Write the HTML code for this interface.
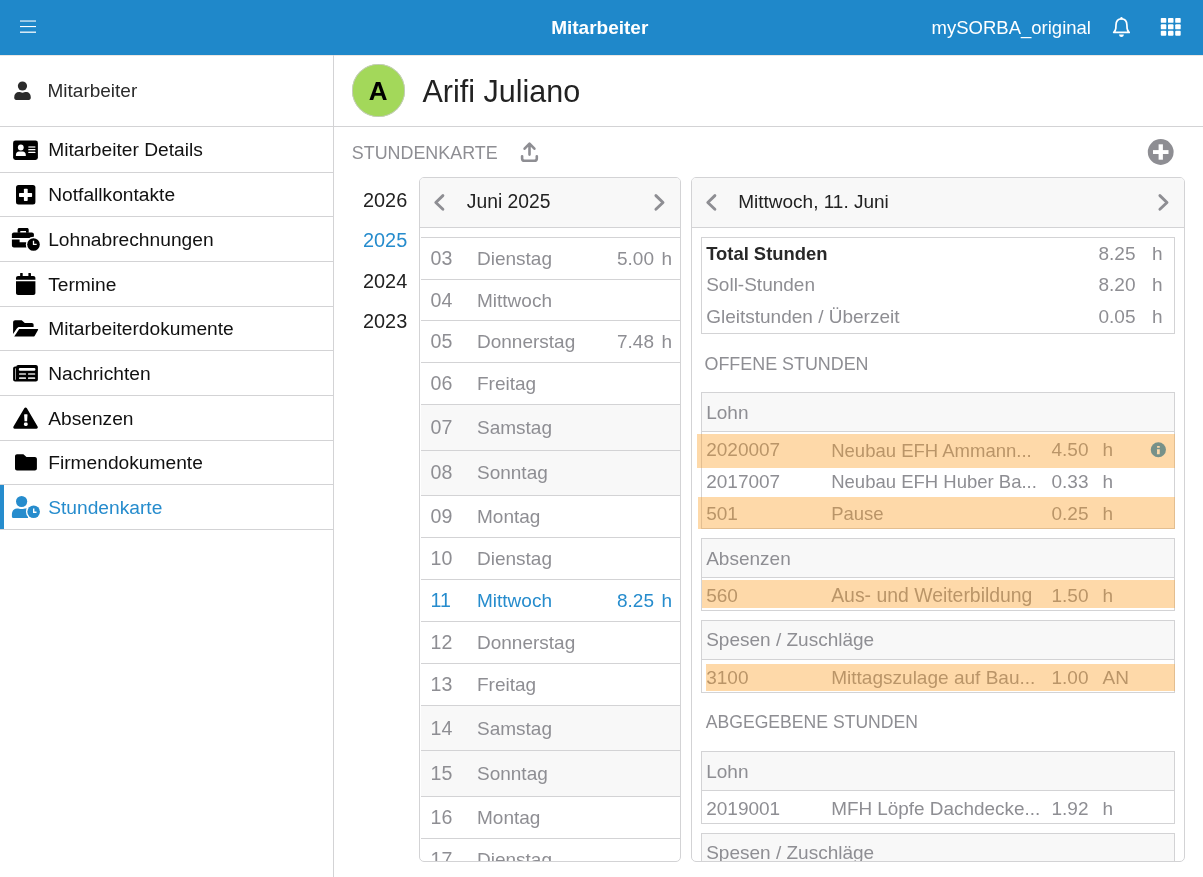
<!DOCTYPE html>
<html><head><meta charset="utf-8"><style>
html,body{margin:0;padding:0;}
body{width:1203px;height:877px;overflow:hidden;position:relative;background:#fff;font-family:'Liberation Sans', sans-serif;}
#root{position:absolute;left:0;top:0;width:1203px;height:877px;will-change:transform;}
.b{position:absolute;box-sizing:border-box;}
svg.b{overflow:visible;}
.t{position:absolute;white-space:nowrap;line-height:normal;}
</style></head><body>
<div id="root">
<div class="b" style="left:0px;top:0px;width:1203px;height:55px;background:#1f88ca"></div>
<svg class="b" style="left:0;top:0" width="1203" height="55" viewBox="0 0 1203 55">
<rect x="20" y="20.3" width="16" height="1.5" fill="#fff" opacity="0.72"/>
<rect x="20" y="26" width="16" height="1.1" fill="#fff"/>
<rect x="20" y="31.5" width="16" height="1.4" fill="#fff" opacity="0.9"/>
<path d="M1121.45 18.9 C1117.7 18.9 1116.1 21.6 1116 25 L1115.8 28.4 C1115.7 30.1 1114.7 31.2 1113.7 32.4 L1129.2 32.4 C1128.2 31.2 1127.2 30.1 1127.1 28.4 L1126.9 25 C1126.8 21.6 1125.2 18.9 1121.45 18.9 Z" fill="none" stroke="#fff" stroke-width="1.7" stroke-linejoin="round"/>
<circle cx="1121.45" cy="18.3" r="1.2" fill="#fff"/>
<path d="M1119 34.5 L1123.9 34.5 C1123.7 36.2 1122.7 37 1121.45 37 C1120.2 37 1119.2 36.2 1119 34.5 Z" fill="#fff"/>
<rect x="1160.80" y="17.90" width="5.5" height="4.95" rx="0.9" fill="#fff"/><rect x="1168.00" y="17.90" width="5.5" height="4.95" rx="0.9" fill="#fff"/><rect x="1175.20" y="17.90" width="5.5" height="4.95" rx="0.9" fill="#fff"/><rect x="1160.80" y="24.35" width="5.5" height="4.95" rx="0.9" fill="#fff"/><rect x="1168.00" y="24.35" width="5.5" height="4.95" rx="0.9" fill="#fff"/><rect x="1175.20" y="24.35" width="5.5" height="4.95" rx="0.9" fill="#fff"/><rect x="1160.80" y="30.80" width="5.5" height="4.95" rx="0.9" fill="#fff"/><rect x="1168.00" y="30.80" width="5.5" height="4.95" rx="0.9" fill="#fff"/><rect x="1175.20" y="30.80" width="5.5" height="4.95" rx="0.9" fill="#fff"/>
</svg>
<div class="b" style="left:0px;top:55px;width:1203px;height:1px;background:#ece7e3"></div>
<div class="t" style="left:551.2px;top:16.70px;font-size:19px;color:#fff;font-weight:700;">Mitarbeiter</div>
<div class="t" style="left:931.6px;top:16.86px;font-size:18.5px;color:#fff;">mySORBA_original</div>
<div class="b" style="left:333px;top:55px;width:1px;height:822px;background:#d3d3d5"></div>
<div class="b" style="left:0px;top:126px;width:333px;height:1px;background:#d3d3d5"></div>
<div class="b" style="left:0px;top:171.55px;width:333px;height:1px;background:#d3d3d5"></div>
<div class="b" style="left:0px;top:216.21px;width:333px;height:1px;background:#d3d3d5"></div>
<div class="b" style="left:0px;top:260.87px;width:333px;height:1px;background:#d3d3d5"></div>
<div class="b" style="left:0px;top:305.53px;width:333px;height:1px;background:#d3d3d5"></div>
<div class="b" style="left:0px;top:350.19px;width:333px;height:1px;background:#d3d3d5"></div>
<div class="b" style="left:0px;top:394.85px;width:333px;height:1px;background:#d3d3d5"></div>
<div class="b" style="left:0px;top:439.51px;width:333px;height:1px;background:#d3d3d5"></div>
<div class="b" style="left:0px;top:484.17px;width:333px;height:1px;background:#d3d3d5"></div>
<div class="b" style="left:0px;top:528.8299999999999px;width:333px;height:1px;background:#d3d3d5"></div>
<div class="t" style="left:47.5px;top:79.81px;font-size:19px;color:#2b2b2b;">Mitarbeiter</div>
<div class="t" style="left:48.2px;top:139.30px;font-size:19.2px;color:#111;">Mitarbeiter Details</div>
<div class="t" style="left:48.2px;top:184.20px;font-size:19.2px;color:#111;">Notfallkontakte</div>
<div class="t" style="left:48.2px;top:228.86px;font-size:19.2px;color:#111;">Lohnabrechnungen</div>
<div class="t" style="left:48.2px;top:273.52px;font-size:19.2px;color:#111;">Termine</div>
<div class="t" style="left:48.2px;top:318.18px;font-size:19.2px;color:#111;">Mitarbeiterdokumente</div>
<div class="t" style="left:48.2px;top:362.84px;font-size:19.2px;color:#111;">Nachrichten</div>
<div class="t" style="left:48.2px;top:407.50px;font-size:19.2px;color:#111;">Absenzen</div>
<div class="t" style="left:48.2px;top:452.16px;font-size:19.2px;color:#111;">Firmendokumente</div>
<div class="t" style="left:48.2px;top:496.82px;font-size:19.2px;color:#268ccd;">Stundenkarte</div>
<svg class="b" style="left:0;top:0" width="50" height="540" viewBox="0 0 50 540">
<!-- person (Mitarbeiter) -->
<circle cx="22.45" cy="86" r="4.6" fill="#2b2b2b"/>
<path d="M14.2 97.6 C14.2 94 16.2 92.1 19 92.1 C20.2 92.1 21.2 92.8 22.5 92.8 C23.8 92.8 24.8 92.1 26 92.1 C28.8 92.1 30.8 94 30.8 97.6 C30.8 99.2 30.1 100 28.8 100 L16.2 100 C14.9 100 14.2 99.2 14.2 97.6 Z" fill="#2b2b2b"/>
<!-- id card -->
<rect x="13.1" y="140.5" width="24.8" height="19.5" rx="2.4" fill="#000"/>
<circle cx="20.8" cy="147.5" r="2.9" fill="#fff"/>
<path d="M15.9 155 C15.9 152.9 17.2 151.6 19 151.6 L22.7 151.6 C24.5 151.6 25.8 152.9 25.8 155 L25.8 156 L15.9 156 Z" fill="#fff"/>
<rect x="28.2" y="146.3" width="7.3" height="1.4" rx="0.6" fill="#fff" opacity="0.8"/>
<rect x="28.2" y="149" width="7.3" height="1.3" rx="0.6" fill="#fff"/>
<rect x="28.2" y="151.8" width="7.3" height="1.3" rx="0.6" fill="#fff"/>
<!-- plus square -->
<rect x="16" y="185" width="19.4" height="19.5" rx="2.5" fill="#000"/>
<rect x="19" y="193" width="13.1" height="3.9" rx="0.7" fill="#fff"/>
<rect x="23.9" y="188.7" width="3.8" height="12.3" rx="0.7" fill="#fff"/>
<!-- briefcase clock -->
<path d="M17.6 232.7 L17.6 229.8 C17.6 228.8 18.3 228.1 19.3 228.1 L27 228.1 C28 228.1 28.7 228.8 28.7 229.8 L28.7 232.7 L26 232.7 L26 231 L20.3 231 L20.3 232.7 Z" fill="#000"/>
<path d="M11.9 237.9 L11.9 234.6 C11.9 233.5 12.8 232.6 13.9 232.6 L31.9 232.6 C33 232.6 33.9 233.5 33.9 234.6 L33.9 236.8 L32 237.9 Z" fill="#000"/>
<path d="M11.9 239.6 L19.6 239.6 L19.6 242.3 L26.5 242.3 L26.5 247.6 L13.9 247.6 C12.8 247.6 11.9 246.7 11.9 245.6 Z" fill="#000"/>
<circle cx="33.5" cy="244.5" r="7.7" fill="#fff"/>
<circle cx="33.5" cy="244.5" r="6.3" fill="#000"/>
<path d="M33.5 241.4 L33.5 244.3 L36 244.3" fill="none" stroke="#fff" stroke-width="1.3" stroke-linecap="square"/>
<!-- calendar -->
<rect x="20.15" y="273" width="2.55" height="4.5" rx="0.5" fill="#000"/>
<rect x="28.4" y="273" width="2.55" height="4.5" rx="0.5" fill="#000"/>
<path d="M16 279.8 L16 278 C16 276.9 16.9 276 18 276 L33.4 276 C34.5 276 35.4 276.9 35.4 278 L35.4 279.8 Z" fill="#000"/>
<path d="M16 281.2 L35.4 281.2 L35.4 292.9 C35.4 294 34.5 294.9 33.4 294.9 L18 294.9 C16.9 294.9 16 294 16 292.9 Z" fill="#000"/>
<!-- open folder -->
<path d="M13.1 333.9 L13.1 322.2 C13.1 321.1 14 320.2 15.1 320.2 L21.7 320.2 L24.8 323.1 L31.8 323.1 C32.9 323.1 33.6 323.8 33.6 324.9 L33.6 326.9 L19.5 326.9 C18.2 326.9 17.4 327.5 16.8 328.5 Z" fill="#000"/>
<path d="M19.2 328.9 L37.4 328.9 C38 328.9 38.3 329.4 38 330 L34.6 335.9 C34.3 336.4 33.8 336.6 33.3 336.6 L14.2 336.6 Z" fill="#000"/>
<!-- newspaper -->
<path d="M16.2 367 C16.2 365.9 17.1 365 18.2 365 L35.9 365 C37 365 37.9 365.9 37.9 367 L37.9 379.6 C37.9 380.7 37 381.6 35.9 381.6 L15.1 381.6 C14 381.6 13.1 380.7 13.1 379.6 L13.1 368.4 C13.1 367.3 14 366.4 15.1 366.4 L16.2 366.4 Z" fill="#000"/>
<rect x="15" y="368" width="0.8" height="11.8" rx="0.4" fill="#fff" opacity="0.8"/>
<rect x="18.8" y="368.1" width="16.6" height="2.6" rx="1.2" fill="#fff"/>
<rect x="19" y="373.2" width="7" height="1.6" rx="0.5" fill="#fff" opacity="0.85"/>
<rect x="28" y="373.2" width="7.2" height="1.6" rx="0.5" fill="#fff" opacity="0.85"/>
<rect x="19" y="377.3" width="7" height="1.6" rx="0.5" fill="#fff" opacity="0.85"/>
<rect x="28" y="377.3" width="7.2" height="1.6" rx="0.5" fill="#fff" opacity="0.85"/>
<!-- warning triangle -->
<path d="M24.3 408.2 C24.9 407.1 26.3 407.1 26.9 408.2 L37.6 426.6 C38.2 427.7 37.5 428.7 36.3 428.7 L14.7 428.7 C13.5 428.7 12.9 427.7 13.5 426.6 Z" fill="#000"/>
<path d="M24.1 414.8 C24.1 414.5 24.4 414.3 24.7 414.3 L26.9 414.3 C27.2 414.3 27.5 414.5 27.5 414.8 L27.1 421.2 L24.5 421.2 Z" fill="#fff"/>
<rect x="23.9" y="422.5" width="3.8" height="3.5" rx="1.4" fill="#fff"/>
<!-- folder -->
<path d="M15 456.2 C15 455.1 15.9 454.2 17 454.2 L23.4 454.2 L26.5 457.1 L34.9 457.1 C36 457.1 36.9 458 36.9 459.1 L36.9 468.6 C36.9 469.7 36 470.6 34.9 470.6 L17 470.6 C15.9 470.6 15 469.7 15 468.6 Z" fill="#000"/>
<!-- user clock -->
<circle cx="21.6" cy="501.5" r="5.6" fill="#268ccd"/>
<path d="M11.9 514.5 C11.9 510.8 14 508.4 17 508.4 C18.6 508.4 19.8 509.1 21.6 509.1 C23.4 509.1 24.6 508.4 26.2 508.4 L28.2 508.4 L28.2 518 L13.4 518 C12.5 518 11.9 517.4 11.9 516.5 Z" fill="#268ccd"/>
<circle cx="33.65" cy="511.75" r="7.7" fill="#fff"/>
<circle cx="33.65" cy="511.75" r="6.3" fill="#268ccd"/>
<path d="M33.7 509.1 L33.7 512.2 L35.8 512.2" fill="none" stroke="#fff" stroke-width="1.4" stroke-linecap="square"/>
</svg>
<div class="b" style="left:0px;top:485px;width:3.6px;height:44px;background:#268ccd"></div>
<div class="b" style="left:352.3px;top:64.2px;width:52.5px;height:52.5px;border-radius:50%;background:#a3d85a;box-shadow:0 0 0 0.8px #c9c9c9 inset"></div>
<div class="t" style="left:368.8px;top:76.37px;font-size:26px;color:#000;font-weight:700;">A</div>
<div class="t" style="left:422.5px;top:74.20px;font-size:30.5px;color:#222222;">Arifi Juliano</div>
<div class="b" style="left:334px;top:126px;width:869px;height:1px;background:#d3d3d5"></div>
<div class="t" style="left:351.8px;top:142.70px;font-size:17.9px;color:#8e8e93;">STUNDENKARTE</div>
<svg class="b" style="left:512px;top:136px" width="36" height="32" viewBox="512 136 36 32">
<path d="M529.5 144 L529.5 154.6 M524.6 148.7 L529.5 143.6 L534.4 148.7" fill="none" stroke="#8e8e93" stroke-width="2.6" stroke-linecap="round" stroke-linejoin="round"/>
<path d="M522.1 156.3 L522.1 158.4 C522.1 159.9 523 160.8 524.5 160.8 L534.4 160.8 C535.9 160.8 536.8 159.9 536.8 158.4 L536.8 156.3" fill="none" stroke="#8e8e93" stroke-width="2.6" stroke-linecap="round"/>
</svg>
<svg class="b" style="left:1147px;top:138px" width="28" height="28" viewBox="0 0 28 28">
<circle cx="13.7" cy="14" r="12.9" fill="#8e8e93"/>
<rect x="6" y="12.1" width="15.5" height="3.9" fill="#fff"/>
<rect x="11.6" y="6.3" width="4.3" height="15.4" fill="#fff"/>
</svg>
<div class="t" style="left:363px;top:188.99px;font-size:19.9px;color:#222222;">2026</div>
<div class="t" style="left:363px;top:229.34px;font-size:19.9px;color:#268ccd;">2025</div>
<div class="t" style="left:363px;top:269.69px;font-size:19.9px;color:#222222;">2024</div>
<div class="t" style="left:363px;top:310.04px;font-size:19.9px;color:#222222;">2023</div>
<div class="b" style="left:419px;top:177px;width:262px;height:685px;border:1px solid #d3d3d5;border-radius:5px;background:#fff"></div>
<div class="b" style="left:420px;top:178px;width:260px;height:49px;background:#f8f8f8;border-radius:4px 4px 0 0"></div>
<div class="b" style="left:420px;top:227px;width:260px;height:1px;background:#d3d3d5"></div>
<svg class="b" style="left:434.0px;top:193.7px" width="12" height="18" viewBox="0 0 12 18"><path d="M8.9 1.6 L1.8 8.5 L8.9 15.3" fill="none" stroke="#8e8e93" stroke-width="2.9" stroke-linecap="round" stroke-linejoin="round"/></svg>
<svg class="b" style="left:653.7px;top:193.79999999999998px" width="12" height="18" viewBox="0 0 12 18"><path d="M1.9 1.6 L9 8.5 L1.9 15.3" fill="none" stroke="#8e8e93" stroke-width="2.9" stroke-linecap="round" stroke-linejoin="round"/></svg>
<div class="t" style="left:466.8px;top:191.03px;font-size:19.3px;color:#222222;">Juni 2025</div>
<div class="b" style="left:420px;top:228px;width:260px;height:633px;overflow:hidden;border-radius:0 0 4px 4px">
<div class="b" style="left:1px;top:8.5px;width:259px;height:1px;background:#d3d3d5"></div>
<div class="t" style="left:10.6px;top:18.71px;font-size:19.6px;color:#8e8e93">03</div>
<div class="t" style="left:57px;top:19.66px;font-size:19px;color:#8e8e93">Dienstag</div>
<div class="t" style="right:26px;top:19.66px;font-size:19px;color:#8e8e93;text-align:right">5.00</div>
<div class="t" style="left:241.5px;top:19.66px;font-size:19px;color:#8e8e93">h</div>
<div class="b" style="left:1px;top:50.60000000000002px;width:259px;height:1px;background:#d3d3d5"></div>
<div class="t" style="left:10.6px;top:60.66px;font-size:19.6px;color:#8e8e93">04</div>
<div class="t" style="left:57px;top:61.61px;font-size:19px;color:#8e8e93">Mittwoch</div>
<div class="b" style="left:1px;top:92.39999999999998px;width:259px;height:1px;background:#d3d3d5"></div>
<div class="t" style="left:10.6px;top:102.36px;font-size:19.6px;color:#8e8e93">05</div>
<div class="t" style="left:57px;top:103.31px;font-size:19px;color:#8e8e93">Donnerstag</div>
<div class="t" style="right:26px;top:103.31px;font-size:19px;color:#8e8e93;text-align:right">7.48</div>
<div class="t" style="left:241.5px;top:103.31px;font-size:19px;color:#8e8e93">h</div>
<div class="b" style="left:1px;top:134.0px;width:259px;height:1px;background:#d3d3d5"></div>
<div class="t" style="left:10.6px;top:144.06px;font-size:19.6px;color:#8e8e93">06</div>
<div class="t" style="left:57px;top:145.00px;font-size:19px;color:#8e8e93">Freitag</div>
<div class="b" style="left:1px;top:176.3px;width:259px;height:45.69999999999999px;background:#f8f8f8"></div>
<div class="b" style="left:1px;top:175.8px;width:259px;height:1px;background:#d3d3d5"></div>
<div class="t" style="left:10.6px;top:187.81px;font-size:19.6px;color:#8e8e93">07</div>
<div class="t" style="left:57px;top:188.75px;font-size:19px;color:#8e8e93">Samstag</div>
<div class="b" style="left:1px;top:222px;width:259px;height:45.5px;background:#f8f8f8"></div>
<div class="b" style="left:1px;top:221.5px;width:259px;height:1px;background:#d3d3d5"></div>
<div class="t" style="left:10.6px;top:233.41px;font-size:19.6px;color:#8e8e93">08</div>
<div class="t" style="left:57px;top:234.36px;font-size:19px;color:#8e8e93">Sonntag</div>
<div class="b" style="left:1px;top:267.0px;width:259px;height:1px;background:#d3d3d5"></div>
<div class="t" style="left:10.6px;top:277.11px;font-size:19.6px;color:#8e8e93">09</div>
<div class="t" style="left:57px;top:278.06px;font-size:19px;color:#8e8e93">Montag</div>
<div class="b" style="left:1px;top:308.9px;width:259px;height:1px;background:#d3d3d5"></div>
<div class="t" style="left:10.6px;top:318.91px;font-size:19.6px;color:#8e8e93">10</div>
<div class="t" style="left:57px;top:319.85px;font-size:19px;color:#8e8e93">Dienstag</div>
<div class="b" style="left:1px;top:350.6px;width:259px;height:1px;background:#d3d3d5"></div>
<div class="t" style="left:10.6px;top:360.86px;font-size:19.6px;color:#268ccd">11</div>
<div class="t" style="left:57px;top:361.81px;font-size:19px;color:#268ccd">Mittwoch</div>
<div class="t" style="right:26px;top:361.81px;font-size:19px;color:#268ccd;text-align:right">8.25</div>
<div class="t" style="left:241.5px;top:361.81px;font-size:19px;color:#268ccd">h</div>
<div class="b" style="left:1px;top:392.79999999999995px;width:259px;height:1px;background:#d3d3d5"></div>
<div class="t" style="left:10.6px;top:403.01px;font-size:19.6px;color:#8e8e93">12</div>
<div class="t" style="left:57px;top:403.95px;font-size:19px;color:#8e8e93">Donnerstag</div>
<div class="b" style="left:1px;top:434.9px;width:259px;height:1px;background:#d3d3d5"></div>
<div class="t" style="left:10.6px;top:444.86px;font-size:19.6px;color:#8e8e93">13</div>
<div class="t" style="left:57px;top:445.81px;font-size:19px;color:#8e8e93">Freitag</div>
<div class="b" style="left:1px;top:477px;width:259px;height:45.799999999999955px;background:#f8f8f8"></div>
<div class="b" style="left:1px;top:476.5px;width:259px;height:1px;background:#d3d3d5"></div>
<div class="t" style="left:10.6px;top:488.56px;font-size:19.6px;color:#8e8e93">14</div>
<div class="t" style="left:57px;top:489.50px;font-size:19px;color:#8e8e93">Samstag</div>
<div class="b" style="left:1px;top:522.8px;width:259px;height:45.40000000000009px;background:#f8f8f8"></div>
<div class="b" style="left:1px;top:522.3px;width:259px;height:1px;background:#d3d3d5"></div>
<div class="t" style="left:10.6px;top:534.16px;font-size:19.6px;color:#8e8e93">15</div>
<div class="t" style="left:57px;top:535.10px;font-size:19px;color:#8e8e93">Sonntag</div>
<div class="b" style="left:1px;top:567.7px;width:259px;height:1px;background:#d3d3d5"></div>
<div class="t" style="left:10.6px;top:577.91px;font-size:19.6px;color:#8e8e93">16</div>
<div class="t" style="left:57px;top:578.85px;font-size:19px;color:#8e8e93">Montag</div>
<div class="b" style="left:1px;top:609.8px;width:259px;height:1px;background:#d3d3d5"></div>
<div class="t" style="left:10.6px;top:619.81px;font-size:19.6px;color:#8e8e93">17</div>
<div class="t" style="left:57px;top:620.75px;font-size:19px;color:#8e8e93">Dienstag</div>
</div>
<div class="b" style="left:691px;top:177px;width:494px;height:685px;border:1px solid #d3d3d5;border-radius:5px;background:#fff"></div>
<div class="b" style="left:692px;top:178px;width:492px;height:49px;background:#f8f8f8;border-radius:4px 4px 0 0"></div>
<div class="b" style="left:692px;top:227px;width:492px;height:1px;background:#d3d3d5"></div>
<svg class="b" style="left:705.8000000000001px;top:194.0px" width="12" height="18" viewBox="0 0 12 18"><path d="M8.9 1.6 L1.8 8.5 L8.9 15.3" fill="none" stroke="#8e8e93" stroke-width="2.9" stroke-linecap="round" stroke-linejoin="round"/></svg>
<svg class="b" style="left:1158.2px;top:193.79999999999998px" width="12" height="18" viewBox="0 0 12 18"><path d="M1.9 1.6 L9 8.5 L1.9 15.3" fill="none" stroke="#8e8e93" stroke-width="2.9" stroke-linecap="round" stroke-linejoin="round"/></svg>
<div class="t" style="left:738.2px;top:190.71px;font-size:19px;color:#222222;">Mittwoch, 11. Juni</div>
<div class="b" style="left:701px;top:237px;width:474px;height:97px;border:1px solid #d3d3d5"></div>
<div class="t" style="left:706.2px;top:243.05px;font-size:18.4px;color:#282828;font-weight:700;">Total Stunden</div>
<div class="t" style="left:706.2px;top:274.41px;font-size:19px;color:#8e8e93;">Soll-Stunden</div>
<div class="t" style="left:706.2px;top:306.31px;font-size:19px;color:#8e8e93;">Gleitstunden / Überzeit</div>
<div class="t" style="right:67.5px;top:242.50px;font-size:19px;color:#8e8e93;">8.25</div>
<div class="t" style="left:1152px;top:242.50px;font-size:19px;color:#8e8e93;">h</div>
<div class="t" style="right:67.5px;top:274.41px;font-size:19px;color:#8e8e93;">8.20</div>
<div class="t" style="left:1152px;top:274.41px;font-size:19px;color:#8e8e93;">h</div>
<div class="t" style="right:67.5px;top:306.31px;font-size:19px;color:#8e8e93;">0.05</div>
<div class="t" style="left:1152px;top:306.31px;font-size:19px;color:#8e8e93;">h</div>
<div class="t" style="left:704.5px;top:353.90px;font-size:17.9px;color:#8e8e93;">OFFENE STUNDEN</div>
<div class="b" style="left:701px;top:392px;width:474px;height:137px;border:1px solid #d3d3d5;background:#fff"></div>
<div class="b" style="left:702px;top:393px;width:472px;height:38px;background:#f8f8f8"></div>
<div class="b" style="left:702px;top:431px;width:472px;height:1px;background:#d3d3d5"></div>
<div class="t" style="left:706.2px;top:401.81px;font-size:19px;color:#8e8e93;">Lohn</div>
<div class="t" style="left:706.2px;top:439.11px;font-size:19px;color:#8e8e93;">2020007</div>
<div class="t" style="left:831.2px;top:439.56px;font-size:18.5px;color:#8e8e93;">Neubau EFH Ammann...</div>
<div class="t" style="right:114.5px;top:439.11px;font-size:19px;color:#8e8e93;">4.50</div>
<div class="t" style="left:1102.6px;top:439.11px;font-size:19px;color:#8e8e93;">h</div>
<svg class="b" style="left:1140px;top:437px" width="30" height="26" viewBox="1140 437 30 26">
<circle cx="1158.35" cy="449.75" r="7.6" fill="#1f88ca"/>
<rect x="1157" y="445.9" width="2.8" height="1.9" rx="0.5" fill="#fff"/>
<path d="M1156.9 449.2 L1159.8 449.2 L1159.7 454.2 L1156.9 454.2 L1157.1 451.7 Z" fill="#fff"/>
</svg>
<div class="b" style="left:697px;top:434px;width:477.79999999999995px;height:33.89999999999998px;background:rgba(252,160,40,0.4)"></div>
<div class="t" style="left:706.2px;top:470.81px;font-size:19px;color:#8e8e93;">2017007</div>
<div class="t" style="left:831.2px;top:471.26px;font-size:18.5px;color:#8e8e93;">Neubau EFH Huber Ba...</div>
<div class="t" style="right:114.5px;top:470.81px;font-size:19px;color:#8e8e93;">0.33</div>
<div class="t" style="left:1102.6px;top:470.81px;font-size:19px;color:#8e8e93;">h</div>
<div class="t" style="left:706.2px;top:502.51px;font-size:19px;color:#8e8e93;">501</div>
<div class="t" style="left:831.2px;top:502.96px;font-size:18.5px;color:#8e8e93;">Pause</div>
<div class="t" style="right:114.5px;top:502.51px;font-size:19px;color:#8e8e93;">0.25</div>
<div class="t" style="left:1102.6px;top:502.51px;font-size:19px;color:#8e8e93;">h</div>
<div class="b" style="left:698px;top:496.9px;width:476.79999999999995px;height:32.10000000000002px;background:rgba(252,160,40,0.4)"></div>
<div class="b" style="left:701px;top:538px;width:474px;height:73px;border:1px solid #d3d3d5;background:#fff"></div>
<div class="b" style="left:702px;top:539px;width:472px;height:38px;background:#f8f8f8"></div>
<div class="b" style="left:702px;top:577px;width:472px;height:1px;background:#d3d3d5"></div>
<div class="t" style="left:706.2px;top:547.80px;font-size:19px;color:#8e8e93;">Absenzen</div>
<div class="t" style="left:706.2px;top:584.50px;font-size:19px;color:#8e8e93;">560</div>
<div class="t" style="left:831.2px;top:584.14px;font-size:19.4px;color:#8e8e93;">Aus- und Weiterbildung</div>
<div class="t" style="right:114.5px;top:584.50px;font-size:19px;color:#8e8e93;">1.50</div>
<div class="t" style="left:1102.6px;top:584.50px;font-size:19px;color:#8e8e93;">h</div>
<div class="b" style="left:702px;top:580px;width:472.79999999999995px;height:27.700000000000045px;background:rgba(252,160,40,0.4)"></div>
<div class="b" style="left:701px;top:620px;width:474px;height:73px;border:1px solid #d3d3d5;background:#fff"></div>
<div class="b" style="left:702px;top:621px;width:472px;height:38px;background:#f8f8f8"></div>
<div class="b" style="left:702px;top:659px;width:472px;height:1px;background:#d3d3d5"></div>
<div class="t" style="left:706.2px;top:629.40px;font-size:19px;color:#8e8e93;">Spesen / Zuschläge</div>
<div class="t" style="left:706.2px;top:666.60px;font-size:19px;color:#8e8e93;">3100</div>
<div class="t" style="left:831.2px;top:666.56px;font-size:19.05px;color:#8e8e93;">Mittagszulage auf Bau...</div>
<div class="t" style="right:114.5px;top:666.60px;font-size:19px;color:#8e8e93;">1.00</div>
<div class="t" style="left:1102.6px;top:666.60px;font-size:19px;color:#8e8e93;">AN</div>
<div class="b" style="left:706px;top:664.1px;width:468.79999999999995px;height:26.600000000000023px;background:rgba(252,160,40,0.4)"></div>
<div class="t" style="left:705.8px;top:712.37px;font-size:17.6px;color:#8e8e93;">ABGEGEBENE STUNDEN</div>
<div class="b" style="left:701px;top:751px;width:474px;height:73px;border:1px solid #d3d3d5;background:#fff"></div>
<div class="b" style="left:702px;top:752px;width:472px;height:38px;background:#f8f8f8"></div>
<div class="b" style="left:702px;top:790px;width:472px;height:1px;background:#d3d3d5"></div>
<div class="t" style="left:706.2px;top:760.50px;font-size:19px;color:#8e8e93;">Lohn</div>
<div class="t" style="left:706.2px;top:797.50px;font-size:19px;color:#8e8e93;">2019001</div>
<div class="t" style="left:831.2px;top:797.60px;font-size:18.9px;color:#8e8e93;">MFH Löpfe Dachdecke...</div>
<div class="t" style="right:114.5px;top:797.50px;font-size:19px;color:#8e8e93;">1.92</div>
<div class="t" style="left:1102.6px;top:797.50px;font-size:19px;color:#8e8e93;">h</div>
<div class="b" style="left:692px;top:828px;width:492px;height:33px;overflow:hidden;border-radius:0 0 4px 4px">
<div class="b" style="left:9px;top:5px;width:474px;height:60px;border:1px solid #d3d3d5;background:#f8f8f8"></div>
<div class="t" style="left:14.2px;top:14.30px;font-size:19px;color:#8e8e93">Spesen / Zuschläge</div>
</div>
</div>
</body></html>
